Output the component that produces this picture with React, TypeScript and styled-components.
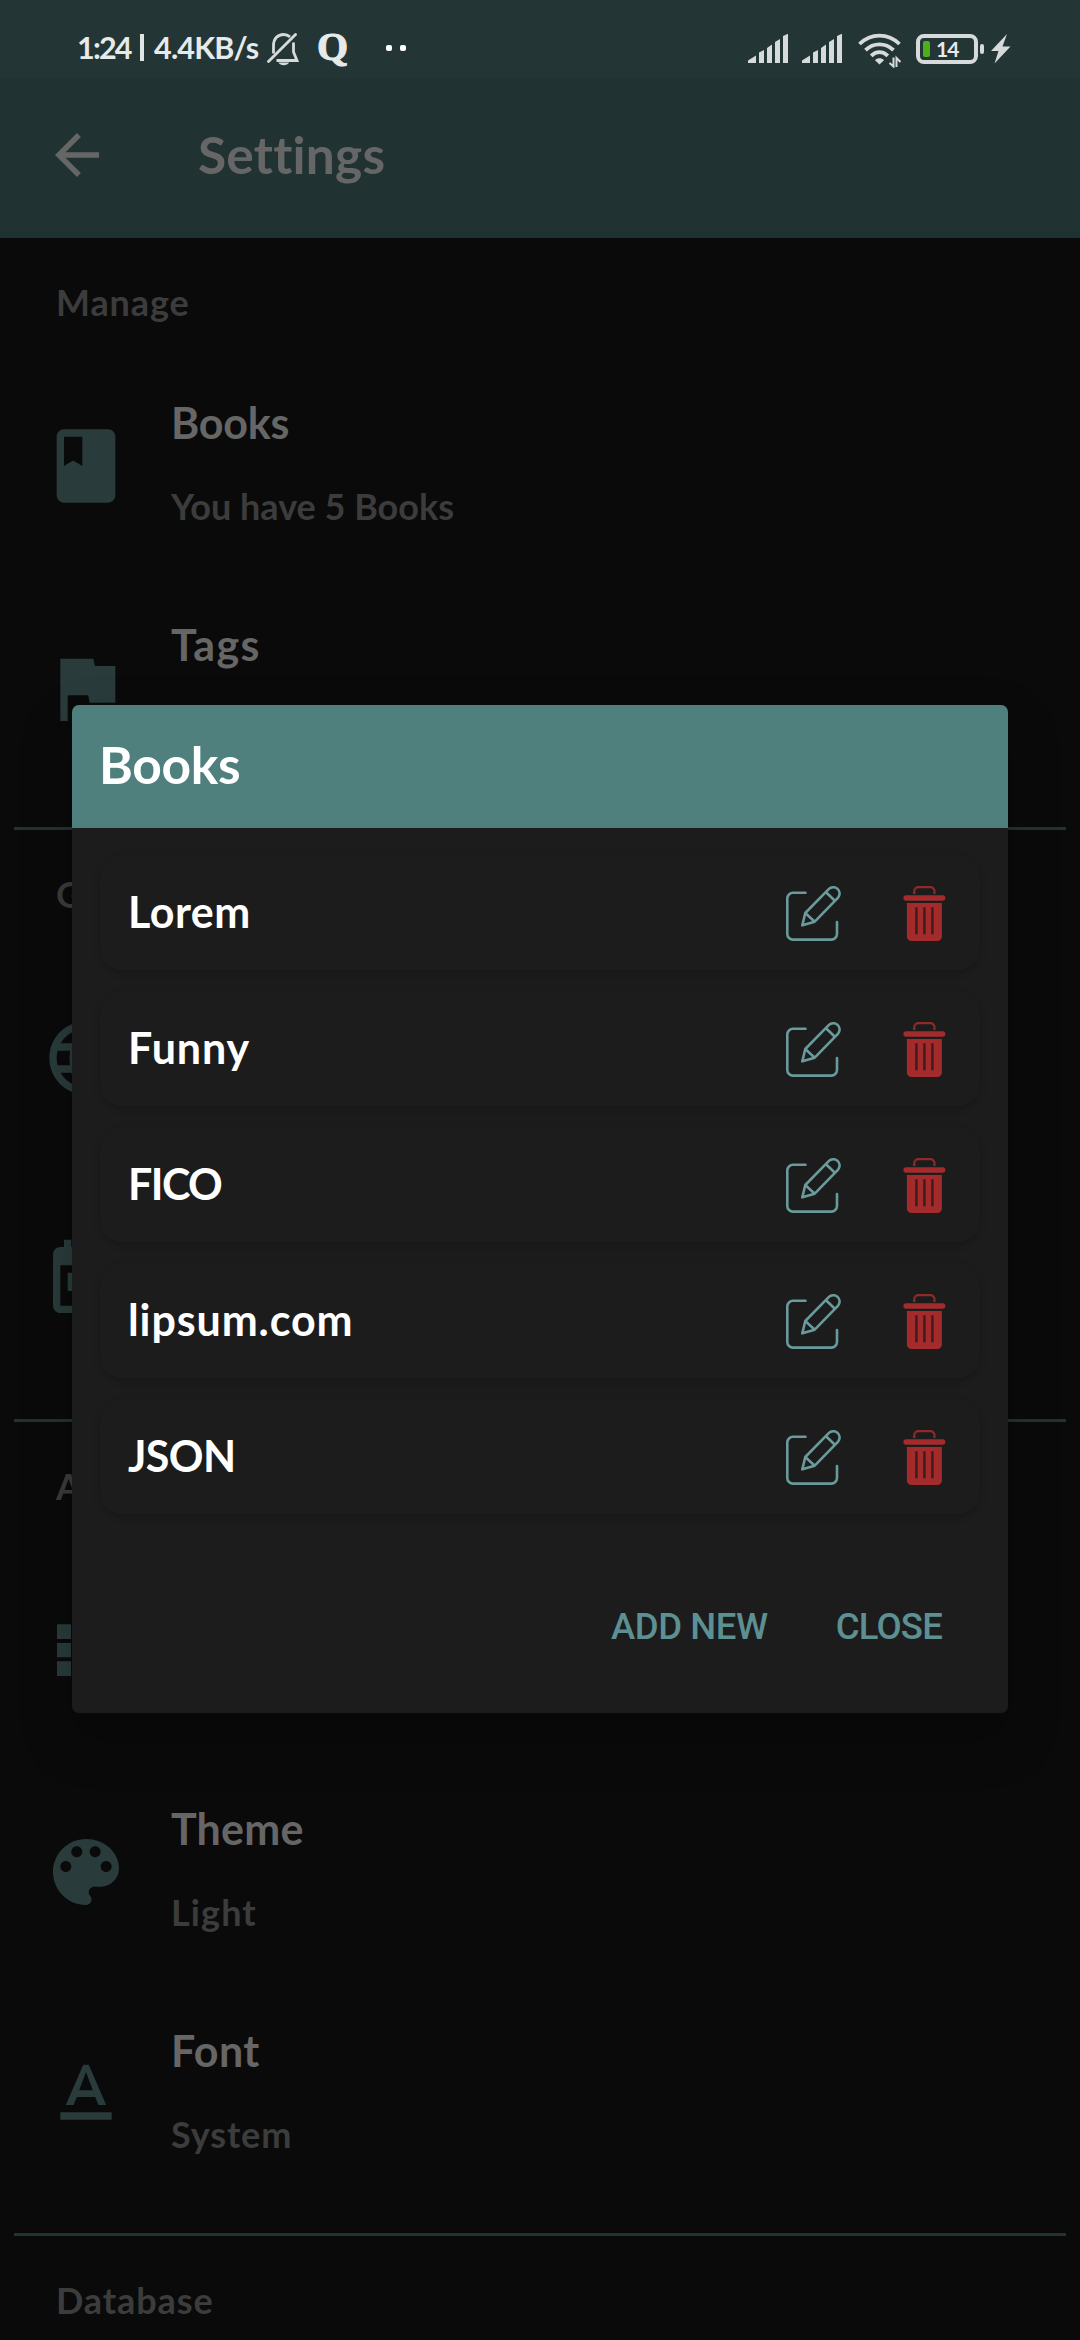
import React from 'react';
import styled, { createGlobalStyle } from 'styled-components';

const GlobalStyle = createGlobalStyle`
  *, *::before, *::after { box-sizing: border-box; }
  html, body { margin: 0; padding: 0; background: #0a0a0a; }
  body {
    font-family: Lato, "Noto Sans", sans-serif;
    font-weight: 700;
    font-variant-ligatures: none;
  }
  svg { display: block; flex: none; }
  button { font: inherit; background: none; border: 0; padding: 0; margin: 0; }
`;

const Screen = styled.div`
  position: relative;
  display: flex;
  flex-direction: column;
  width: 1080px;
  height: 2340px;
  overflow: hidden;
  background: #0a0a0a;
`;

const StatusBar = styled.div`
  display: flex;
  flex: none;
  justify-content: space-between;
  height: 78px;
  padding: 33px 69px 0 77px;
  background: #233635;
  color: #e6eaea;
`;

const StatusGroup = styled.div`
  display: flex;
  align-items: flex-start;
`;

const StatusText = styled.span<{ $width: number; $track: number }>`
  width: ${p => p.$width}px;
  margin-top: -4px;
  font-size: 30.5px;
  line-height: 37px;
  letter-spacing: ${p => p.$track}px;
  white-space: nowrap;
`;

const StatusRule = styled.span`
  width: 4px;
  height: 27px;
  margin: 1px 10px 0 9px;
  background: #dfe4e4;
`;

const BrandLetter = styled.span`
  width: 32px;
  margin: -8px 0 0 17px;
  font-family: "Liberation Serif", serif;
  font-size: 40px;
  line-height: 44px;
  -webkit-text-stroke: 1px #e6eaea;
`;

const MoreDots = styled.span`
  display: flex;
  gap: 8px;
  margin: 12px 0 0 37px;
`;

const Dot = styled.span`
  width: 6px;
  height: 6px;
  border-radius: 2px;
  background: #fff;
`;

const StatusIcons = styled.div`
  display: flex;
  align-items: flex-start;
`;

const IconSlot = styled.span<{ $gap: number }>`
  margin-right: ${p => p.$gap}px;
`;

const Battery = styled.div`
  display: flex;
  align-items: center;
  gap: 2px;
  margin: 1px 7px 0 0;
`;

const BatteryShell = styled.div`
  display: flex;
  align-items: center;
  width: 62px;
  height: 30px;
  padding-left: 3px;
  border: 4px solid #d6dada;
  border-radius: 8px;
  font-size: 21px;
  line-height: 20px;
  letter-spacing: -1px;
`;

const BatteryLevel = styled.span`
  width: 7px;
  height: 16px;
  margin-right: 6px;
  border-radius: 2px;
  background: #4caf1c;
`;

const BatteryNub = styled.span`
  width: 4px;
  height: 10px;
  border-radius: 2px;
  background: #d6dada;
`;

const AppBar = styled.header`
  display: flex;
  flex: none;
  align-items: center;
  height: 160px;
  padding: 0 44px;
  background: #203231;
  border-bottom: 6px solid #1d3130;
`;

const Title = styled.h1`
  margin: -3px 0 0 88px;
  color: #666;
  font-size: 51.5px;
  line-height: 62px;
  letter-spacing: 0.2px;
`;

const Section = styled.section`
  flex: none;
  padding-bottom: 28px;
`;

const Divider = styled.hr`
  flex: none;
  height: 3px;
  margin: 0 14px;
  border: 0;
  background: #213433;
`;

const SectionTitle = styled.h2`
  height: 117px;
  margin: 0;
  padding: 42px 56px 0;
  color: #3c3c3c;
  font-size: 36px;
  line-height: 44px;
  letter-spacing: 0.9px;
`;

const Item = styled.div`
  display: flex;
  align-items: center;
  height: 222px;
  padding-left: 42px;
`;

const ItemText = styled.div`
  display: flex;
  flex-direction: column;
  gap: 35px;
  margin: -7px 0 0 41px;
`;

const ItemName = styled.span<{ $track?: number }>`
  min-height: 52px;
  color: #666;
  font-size: 43px;
  line-height: 52px;
  letter-spacing: ${p => p.$track ?? 0}px;
`;

const ItemDetail = styled.span<{ $track?: number }>`
  min-height: 44px;
  color: #3c3c3c;
  font-size: 36px;
  line-height: 44px;
  letter-spacing: ${p => p.$track ?? 0}px;
`;

const Overlay = styled.div`
  position: absolute;
  inset: 78px 0 0;
  display: flex;
  align-items: center;
  justify-content: center;
`;

const Dialog = styled.div`
  display: flex;
  flex-direction: column;
  width: 936px;
  height: 1008px;
  overflow: hidden;
  border-radius: 7px;
  background: #1c1c1c;
  box-shadow: 0 24px 50px 4px rgba(0, 0, 0, 0.22);
`;

const DialogTitle = styled.h2`
  flex: none;
  height: 123px;
  margin: 0;
  padding: 28px 27px 0;
  background: #4f807e;
  color: #fff;
  font-size: 51.5px;
  line-height: 62px;
  letter-spacing: -0.3px;
`;

const BookList = styled.div`
  display: flex;
  flex: 1;
  flex-direction: column;
  gap: 21px;
  padding: 27px 28px 0;
`;

const BookCard = styled.div`
  display: flex;
  align-items: center;
  height: 115px;
  padding: 0 34px 0 28px;
  border-radius: 22px;
  background: #1c1c1c;
  box-shadow: 0 3px 7px rgba(0, 0, 0, 0.17);
`;

const BookName = styled.span<{ $track: number }>`
  flex: 1;
  margin-top: -1px;
  color: #fff;
  font-size: 43px;
  line-height: 52px;
  letter-spacing: ${p => p.$track}px;
`;

const CardActions = styled.div`
  display: flex;
  gap: 62px;
  margin-top: 2px;
`;

const DialogActions = styled.div`
  display: flex;
  justify-content: flex-end;
  gap: 68px;
  padding: 0 66px 64px 0;
`;

const ActionButton = styled.button<{ $track: number }>`
  color: #5c9092;
  font-family: Roboto, sans-serif;
  font-weight: 500;
  font-size: 36.5px;
  line-height: 44px;
  letter-spacing: ${p => p.$track}px;
`;

const Glyph = ({ d }: { d: string }) => (
  <svg width="88" height="88" viewBox="0 0 24 24" fill="#293c3b"><path d={d} /></svg>
);

const glyphs = {
  book: 'M18 2H6c-1.1 0-2 .9-2 2v16c0 1.1.9 2 2 2h12c1.1 0 2-.9 2-2V4c0-1.1-.9-2-2-2zM6 4h5v8l-2.5-1.5L6 12V4z',
  flag: 'M14.4 6L14 4H5v17h2v-7h5.6l.4 2h7V6z',
  globe: 'M11.99 2C6.47 2 2 6.48 2 12s4.47 10 9.99 10C17.52 22 22 17.52 22 12S17.52 2 11.99 2zm6.93 6h-2.95a15.65 15.65 0 0 0-1.38-3.56A8.03 8.03 0 0 1 18.92 8zM12 4.04c.83 1.2 1.48 2.53 1.91 3.96h-3.82c.43-1.43 1.08-2.76 1.91-3.96zM4.26 14C4.1 13.36 4 12.69 4 12s.1-1.36.26-2h3.38c-.08.66-.14 1.32-.14 2s.06 1.34.14 2H4.26zm.82 2h2.95c.32 1.25.78 2.45 1.38 3.56A7.99 7.99 0 0 1 5.08 16zm2.95-8H5.08a7.99 7.99 0 0 1 4.33-3.56A15.65 15.65 0 0 0 8.03 8zM12 19.96c-.83-1.2-1.48-2.53-1.91-3.96h3.82c-.43 1.43-1.08 2.76-1.91 3.96zM14.34 14H9.66c-.09-.66-.16-1.32-.16-2s.07-1.35.16-2h4.68c.09.65.16 1.32.16 2s-.07 1.34-.16 2zm.25 5.56c.6-1.11 1.06-2.31 1.38-3.56h2.95a8.03 8.03 0 0 1-4.33 3.56zM16.36 14c.08-.66.14-1.32.14-2s-.06-1.34-.14-2h3.38c.16.64.26 1.31.26 2s-.1 1.36-.26 2h-3.38z',
  calendar: 'M19 3h-1V1h-2v2H8V1H6v2H5c-1.11 0-1.99.9-1.99 2L3 19c0 1.1.89 2 2 2h14c1.1 0 2-.9 2-2V5c0-1.1-.9-2-2-2zm0 16H5V8h14v11zM7 10h5v5H7z',
  list: 'M4 14h4v-4H4v4zm0 5h4v-4H4v4zM4 9h4V5H4v4zm5 5h12v-4H9v4zm0 5h12v-4H9v4zM9 5v4h12V5H9z',
  palette: 'M12 3c-4.97 0-9 4.03-9 9s4.03 9 9 9c.83 0 1.5-.67 1.5-1.5 0-.39-.15-.74-.39-1.01-.23-.26-.38-.61-.38-.99 0-.83.67-1.5 1.5-1.5H16c2.76 0 5-2.24 5-5 0-4.42-4.03-8-9-8zm-5.5 9c-.83 0-1.5-.67-1.5-1.5S5.67 9 6.5 9 8 9.67 8 10.5 7.33 12 6.5 12zm3-4C8.67 8 8 7.33 8 6.5S8.67 5 9.5 5s1.5.67 1.5 1.5S10.33 8 9.5 8zm5 0c-.83 0-1.5-.67-1.5-1.5S13.67 5 14.5 5s1.5.67 1.5 1.5S15.33 8 14.5 8zm3 4c-.83 0-1.5-.67-1.5-1.5S16.67 9 17.5 9s1.5.67 1.5 1.5-.67 1.5-1.5 1.5z',
  font: 'M5 17v2h14v-2H5zm4.5-4.2h5l.9 2.2h2.1L12.75 4h-1.5L6.5 15h2.1l.9-2.2zM12 5.98L13.87 11h-3.74L12 5.98z',
};

// Row strips of the view list sit a little apart from one another.
const ListGlyph = () => (
  <svg width="88" height="88" viewBox="0 0 88 88" fill="#293c3b">
    <path d="M15 18.300H29V33H15ZM15 37H29V51.300H15ZM15 55.300H29V70H15ZM33 18.300H77V33H33ZM33 37H77V51.300H33ZM33 55.300H77V70H33Z" />
  </svg>
);

const BellOff = () => (
  <svg width="33" height="33" viewBox="0 0 33 33" fill="none" stroke="#d6dada" strokeWidth="2.8">
    <path d="M6.500 20.500V12.500C6.500 6 10.500 1.500 16.500 1.500C19 1.500 21.200 2.300 23 3.800M26.500 9.500V19L30 27.500H9.500" />
    <path d="M1.500 28.500L28.500 1.500" strokeLinecap="round" />
    <path d="M11.500 29.500H22C20.500 33 13 33 11.500 29.500Z" fill="#d6dada" stroke="none" />
  </svg>
);

const Signal = () => (
  <svg width="40" height="30" viewBox="0 0 40 30" fill="#d6dada">
    <path d="M0 30V27.500L8 22.500V30ZM11 30V19.500L16 17V30ZM19 30V15L24 11.500V30ZM27 30V9L32 6V30ZM35 30V3L40 .8V30Z" />
  </svg>
);

const Wifi = () => (
  <svg width="44" height="35" viewBox="0 0 44 35" fill="none" stroke="#d6dada" strokeWidth="3.800">
    <path d="M1.500 11C13-.2 30-.2 41.500 11M7.500 17.200C15.500 9.300 27.500 9.300 35.500 17.200M13.200 22.800C18 17.900 25 17.900 29.800 22.800" />
    <path d="M17 27.200C19.500 24.700 23.500 24.700 26 27.200L21.500 31.500Z" fill="#d6dada" stroke="none" />
    <path d="M35.500 24.500V33.500L31.500 30M38.500 34V25L42.500 29" strokeWidth="2" />
  </svg>
);

const Bolt = () => (
  <svg width="20" height="31" viewBox="0 0 20 31" fill="#d6dada"><path d="M16 1L0 18H7.500L3.500 30.500L19.500 13.500H11.500Z" /></svg>
);

const BackArrow = () => (
  <svg width="66" height="66" viewBox="0 0 24 24" fill="#666"><path d="M20 11H7.830l5.590-5.590L12 4l-8 8 8 8 1.410-1.410L7.830 13H20v-2z" /></svg>
);

const EditIcon = () => (
  <svg width="55" height="55" viewBox="0 0 55 55" fill="none" stroke="#6a9a9b" strokeWidth="2.600" strokeLinecap="round" strokeLinejoin="round">
    <path d="M19.500 6.800H7A5.700 5.700 0 0 0 1.300 12.500V48A5.700 5.700 0 0 0 7 53.600H45.300A5.700 5.700 0 0 0 51 48V36" />
    <path d="M16.300 39.300L19.300 27L42.700 3.200A6.100 6.100 0 0 1 51.900 11.800L28.700 35.700ZM19.300 27L28.700 35.700M40 6.200L48.900 14.800" />
  </svg>
);

const TrashIcon = () => (
  <svg width="43" height="55" viewBox="0 0 43 55" fill="#a32b2b">
    <path d="M11.300 8V5A4 4 0 0 1 15.300 1.200H27.500A4 4 0 0 1 31.500 5V8" fill="none" stroke="#8d2b2b" strokeWidth="2.200" />
    <rect x=".4" y="9.200" width="42" height="5.600" rx="2.800" />
    <path d="M3.900 17H38.900V50.500A4.500 4.500 0 0 1 34.400 55H8.400A4.500 4.500 0 0 1 3.900 50.500Z" />
    <path d="M13.400 22.300V47.300M21.400 22.300V47.300M29.400 22.300V47.300" stroke="#451a1c" strokeWidth="2.500" strokeLinecap="round" />
  </svg>
);

type Entry = { icon: React.ReactNode; name: string; detail: string; track?: number; detailTrack?: number };
const sections: { title: string; items: Entry[] }[] = [
  {
    title: 'Manage',
    items: [
      { icon: <Glyph d={glyphs.book} />, name: 'Books', detail: 'You have 5 Books', track: -0.2 },
      { icon: <Glyph d={glyphs.flag} />, name: 'Tags', detail: '', track: 1.3 },
    ],
  },
  {
    title: 'G',
    items: [
      { icon: <Glyph d={glyphs.globe} />, name: '', detail: '' },
      { icon: <Glyph d={glyphs.calendar} />, name: '', detail: '' },
    ],
  },
  {
    title: 'A',
    items: [
      { icon: <ListGlyph />, name: '', detail: '' },
      { icon: <Glyph d={glyphs.palette} />, name: 'Theme', detail: 'Light', track: 0.2, detailTrack: 1.1 },
      { icon: <Glyph d={glyphs.font} />, name: 'Font', detail: 'System', track: 0.4, detailTrack: 0.9 },
    ],
  },
  { title: 'Database', items: [] },
];

const books = [
  { name: 'Lorem', track: 0.5 },
  { name: 'Funny', track: 0.85 },
  { name: 'FICO', track: -1.6 },
  { name: 'lipsum.com', track: 0.9 },
  { name: 'JSON', track: -0.6 },
];

export default function App() {
  return (
    <Screen>
      <GlobalStyle />
      <StatusBar>
        <StatusGroup>
          <StatusText $width={54} $track={-1.8}>1:24</StatusText>
          <StatusRule />
          <StatusText $width={113} $track={-0.8}>4.4KB/s</StatusText>
          <BellOff />
          <BrandLetter>Q</BrandLetter>
          <MoreDots><Dot /><Dot /></MoreDots>
        </StatusGroup>
        <StatusIcons>
          <IconSlot $gap={14}><Signal /></IconSlot>
          <IconSlot $gap={16}><Signal /></IconSlot>
          <IconSlot $gap={14}><Wifi /></IconSlot>
          <Battery>
            <BatteryShell><BatteryLevel />14</BatteryShell>
            <BatteryNub />
          </Battery>
          <Bolt />
        </StatusIcons>
      </StatusBar>
      <AppBar>
        <BackArrow />
        <Title>Settings</Title>
      </AppBar>
      {sections.map((section, index) => (
        <React.Fragment key={section.title}>
          {index > 0 && <Divider />}
          <Section>
            <SectionTitle>{section.title}</SectionTitle>
            {section.items.map((item, i) => (
              <Item key={i}>
                {item.icon}
                <ItemText>
                  <ItemName $track={item.track}>{item.name}</ItemName>
                  <ItemDetail $track={item.detailTrack}>{item.detail}</ItemDetail>
                </ItemText>
              </Item>
            ))}
          </Section>
        </React.Fragment>
      ))}
      <Overlay>
        <Dialog>
          <DialogTitle>Books</DialogTitle>
          <BookList>
            {books.map(book => (
              <BookCard key={book.name}>
                <BookName $track={book.track}>{book.name}</BookName>
                <CardActions>
                  <EditIcon />
                  <TrashIcon />
                </CardActions>
              </BookCard>
            ))}
          </BookList>
          <DialogActions>
            <ActionButton $track={-0.4}>ADD NEW</ActionButton>
            <ActionButton $track={-0.8}>CLOSE</ActionButton>
          </DialogActions>
        </Dialog>
      </Overlay>
    </Screen>
  );
}
